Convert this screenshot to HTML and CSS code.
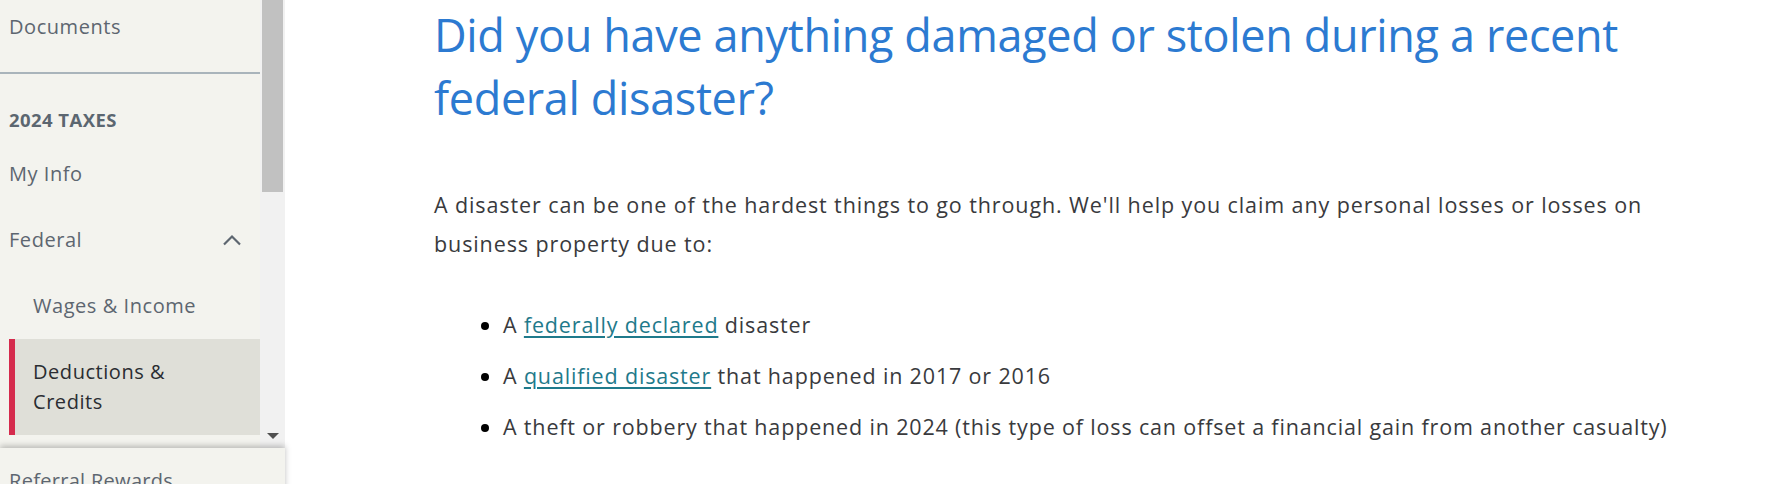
FILE: index.html
```html
<!DOCTYPE html>
<html lang="en">
<head>
    <meta charset="UTF-8">
    <meta name="viewport" content="width=device-width, initial-scale=1.0">
    <title>Deductions &amp; Credits</title>
    <link rel="stylesheet" href="styles.css">
</head>
<body>
    <aside class="sidebar">
        <div class="nav-scroll">
            <nav class="nav">
                <a class="nav-item">Documents</a>
                <div class="nav-divider"></div>
                <div class="nav-heading">2024 TAXES</div>
                <a class="nav-item">My Info</a>
                <a class="nav-item nav-item-open">
                    <span>Federal</span>
                    <svg class="chevron" width="20" height="12" viewBox="0 0 20 12">
                        <path d="M2 10.5 L10 2.5 L18 10.5" fill="none" stroke="#5d6670" stroke-width="2.2"/>
                    </svg>
                </a>
                <a class="nav-sub">Wages &amp; Income</a>
                <a class="nav-sub active">Deductions &amp; Credits</a>
            </nav>
            <div class="scrollbar">
                <div class="scroll-thumb"></div>
                <div class="scroll-arrow"></div>
            </div>
        </div>
        <div class="nav-footer">
            <a class="nav-item">Referral Rewards</a>
        </div>
    </aside>

    <main class="content">
        <div class="page">
            <h1>Did you have anything damaged or stolen during a recent federal disaster?</h1>
            <p>A disaster can be one of the hardest things to go through. We'll help you claim any personal losses or losses on business property due to:</p>
            <ul class="causes">
                <li>A <a href="#">federally declared</a> disaster</li>
                <li>A <a href="#">qualified disaster</a> that happened in 2017 or 2016</li>
                <li>A theft or robbery that happened in 2024 (this type of loss can offset a financial gain from another casualty)</li>
            </ul>
        </div>
    </main>
</body>
</html>
```
FILE: styles.css
```css
body {
    margin: 0;
    display: flex;
    height: 484px;
    overflow: hidden;
    font-family: 'Open Sans', sans-serif;
    color: #393a3d;
    background: #fff;
}

/* left navigation */
.sidebar {
    width: 285px;
    flex: none;
    background: #f3f3ee;
    display: flex;
    flex-direction: column;
}
.nav-scroll {
    height: 448px;
    flex: none;
    display: flex;
    overflow: hidden;
}
.nav {
    width: 260px;
    flex: none;
    margin-top: -6px;
    display: flex;
    flex-direction: column;
}
.nav-item, .nav-sub {
    display: flex;
    align-items: center;
    justify-content: space-between;
    padding: 18px 18px 18px 9px;
    font-size: 20px;
    line-height: 30px;
    letter-spacing: 0.55px;
    color: #5d6670;
    flex: none;
}
.nav-sub {
    margin-left: 9px;
    border-left: 6px solid transparent;
    padding-left: 18px;
    padding-right: 50px;
}
.nav-sub.active {
    background: #dfdfd8;
    border-left-color: #d52b4d;
    color: #2a2d32;
}
.chevron { display: block; }
.nav-divider {
    margin-top: 12px;
    border-top: 2px solid #a9b4bb;
    flex: none;
}
.nav-heading {
    padding: 34px 9px 9px;
    font-size: 18.5px;
    line-height: 24px;
    font-weight: 700;
    letter-spacing: 0.45px;
    color: #5b6670;
    flex: none;
}

/* fake scrollbar of the nav list */
.scrollbar {
    width: 25px;
    background: #f1f1f1;
    display: flex;
    flex-direction: column;
    align-items: center;
}
.scroll-thumb {
    width: 21px;
    height: 192px;
    background: #c1c1c1;
}
.scroll-arrow {
    margin-top: auto;
    margin-bottom: 9px;
    width: 0;
    height: 0;
    border-left: 6px solid transparent;
    border-right: 6px solid transparent;
    border-top: 6px solid #505050;
}
.nav-footer {
    position: relative;
    flex: 1;
    background: #f3f3ee;
    box-shadow: 0 -2px 6px rgba(0, 0, 0, 0.25);
}
.nav-footer .nav-item {
    letter-spacing: 0.3px;
}

/* main content */
.content {
    flex: 1;
    padding-left: 149px;
}
.page {
    width: 1250px;
}
h1 {
    margin: 3px 0 0;
    font-size: 45px;
    line-height: 63px;
    font-weight: 400;
    letter-spacing: -0.35px;
    color: #2c7ad1;
}
p {
    margin: 57px 0 0;
    font-size: 21.5px;
    line-height: 38.5px;
    letter-spacing: 0.9px;
}
.causes {
    margin: 43px 0 0;
    padding-left: 69px;
    font-size: 21.5px;
    line-height: 38.5px;
    letter-spacing: 0.84px;
}
.causes li {
    margin-bottom: 12.5px;
}
.causes li::marker {
    color: #000;
}
.causes a {
    color: #1f7a8b;
    text-decoration-thickness: 2px;
    text-underline-offset: 3px;
}
```
